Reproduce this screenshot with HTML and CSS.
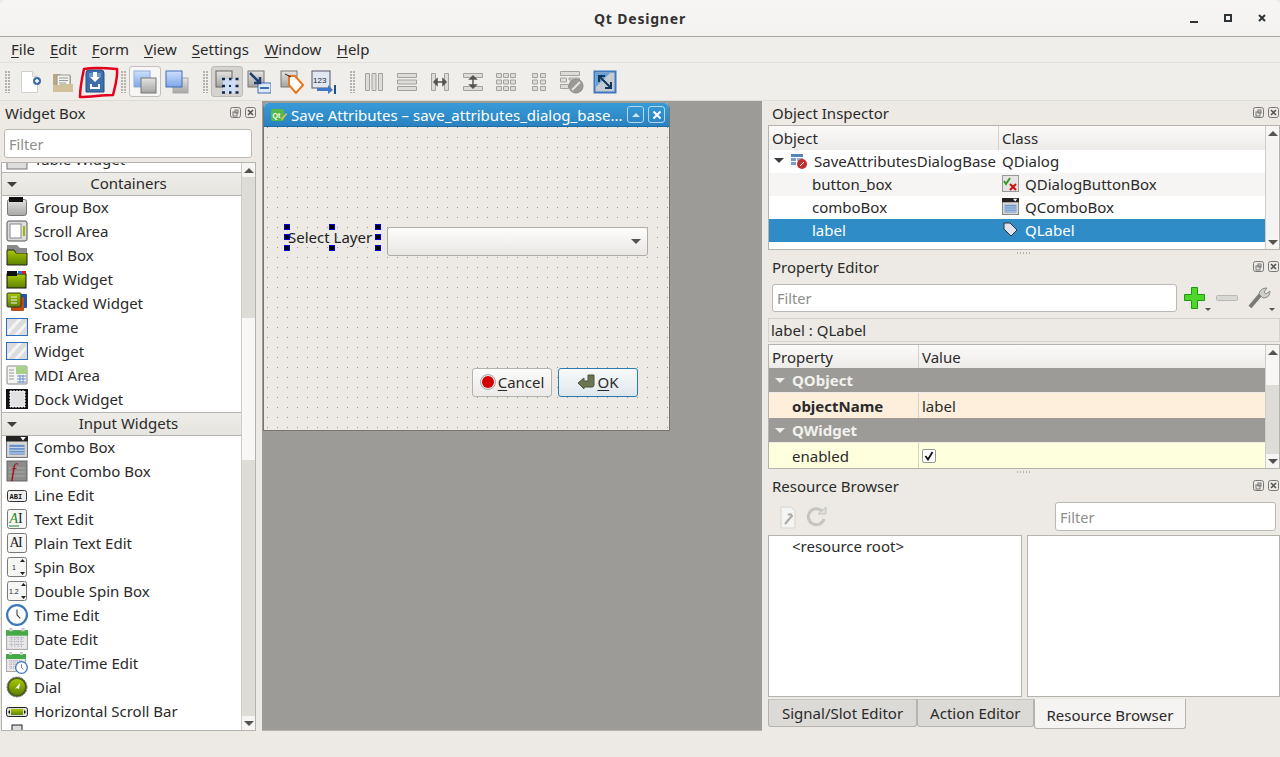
FILE: index.html
```html
<!DOCTYPE html>
<html lang="en">
<head>
  <meta charset="UTF-8" />
  <title>Qt Designer</title>
  <link rel="stylesheet" href="styles.css">
</head>
<body>
  <svg class="defs" width="0" height="0">
    <defs>
      <linearGradient id="gBlue" x1="0" y1="0" x2="0" y2="1"><stop offset="0" stop-color="#cfe0fb"/><stop offset="1" stop-color="#7ea6e8"/></linearGradient>
      <linearGradient id="gGrey" x1="0" y1="0" x2="0" y2="1"><stop offset="0" stop-color="#e4e4e2"/><stop offset="1" stop-color="#a5a5a3"/></linearGradient>
      <linearGradient id="gGreen" x1="0" y1="0" x2="0" y2="1"><stop offset="0" stop-color="#a8c800"/><stop offset="1" stop-color="#5f8000"/></linearGradient>
      <symbol id="dockbtns" viewBox="0 0 26 12">
        <rect x=".5" y=".5" width="10" height="10" rx="2" fill="none" stroke="#777"/><rect x="3" y="5" width="4" height="4" fill="none" stroke="#777"/><rect x="5" y="3" width="3" height="3" fill="none" stroke="#777"/>
        <rect x="15.5" y=".5" width="10" height="10" rx="2" fill="none" stroke="#777"/><path d="M18 3l5 5M23 3l-5 5" stroke="#555" stroke-width="1.6"/>
      </symbol>
      <symbol id="hatch" viewBox="0 0 22 18">
        <rect x="1" y="1" width="20" height="16" fill="#dcdcdc"/>
        <path d="M1 13L12 1h4L2 17zM8 17L20 4v4L12 17z" fill="#f4f4f4"/>
      </symbol>
      <symbol id="combo" viewBox="0 0 20 20">
        <rect x=".5" y=".5" width="19" height="19" fill="#d8d8d6" stroke="#777"/><rect x="0" y="0" width="20" height="5" fill="#222"/><path d="M13 1h5l-2.5 3z" fill="#fff"/>
        <rect x="3" y="8" width="14" height="9" fill="#6a93c8"/><path d="M3 10.5h14M3 13h14M3 15.5h14" stroke="#c8d8ec"/>
      </symbol>
      <symbol id="clock" viewBox="0 0 20 20">
        <circle cx="10" cy="10" r="9" fill="#fff" stroke="#3c78b8" stroke-width="2"/><path d="M10 5v5l3 3" fill="none" stroke="#444"/>
      </symbol>
      <symbol id="calendar" viewBox="0 0 20 20">
        <rect x=".5" y="2.5" width="19" height="17" fill="#e8e8e8" stroke="#aaa"/><rect x="0" y="2" width="20" height="5" fill="#45a945"/>
        <path d="M3 9h14M3 12h14M3 15h14M5 8v9M8 8v9M11 8v9M14 8v9" stroke="#aab" stroke-dasharray="1 1"/><rect x="3" y="0" width="3" height="3" fill="#ccc"/><rect x="14" y="0" width="3" height="3" fill="#ccc"/>
      </symbol>
    </defs>
  </svg>

  <header class="titlebar">
    <span class="window-title">Qt Designer</span>
    <div class="window-controls">
      <svg width="10" height="10" viewBox="0 0 10 10"><path d="M0 8h8" stroke="#2e3436" stroke-width="2"/></svg>
      <svg width="10" height="10" viewBox="0 0 10 10"><rect x="1" y="1" width="6" height="6" fill="none" stroke="#2e3436" stroke-width="2"/></svg>
      <svg width="10" height="10" viewBox="0 0 10 10"><path d="M1 1l6 6M7 1L1 7" stroke="#2e3436" stroke-width="2"/></svg>
    </div>
  </header>

  <nav class="menubar">
    <span class="menu"><u>F</u>ile</span>
    <span class="menu"><u>E</u>dit</span>
    <span class="menu"><u>F</u>orm</span>
    <span class="menu"><u>V</u>iew</span>
    <span class="menu"><u>S</u>ettings</span>
    <span class="menu"><u>W</u>indow</span>
    <span class="menu"><u>H</u>elp</span>
  </nav>

  <div class="toolbar">
    <i class="grip"></i>
    <span class="tool"><svg width="24" height="24" viewBox="0 0 24 24"><path d="M3.500 1.500h11l5 5v16h-16z" fill="#fff" stroke="#d0d0cc"/><path d="M14.500 1.500v5h5" fill="#eee" stroke="#d0d0cc"/><circle cx="19" cy="11" r="4" fill="#3f6fa8"/><path d="M17 11h4M19 9v4" stroke="#fff" stroke-width="1.500"/></svg></span>
    <span class="tool"><svg width="24" height="24" viewBox="0 0 24 24"><path d="M2 4h7l2 2h9v16H2z" fill="#b9a785"/><rect x="6" y="5" width="13" height="11" fill="#f2f2ee" stroke="#9a9a92"/><path d="M8 8h9M8 10.500h9M8 13h7" stroke="#9a9a92"/><path d="M2 15h6l1-1h13v8H2z" fill="#d2c09c"/></svg></span>
    <span class="tool tool-save">
      <svg width="24" height="26" viewBox="0 0 24 26"><path d="M3 4q0-3 3-3h12q3 0 3 3v19H3z" fill="#3d6eb0" stroke="#24507f"/><path d="M6 4h12v4H6z" fill="#6d97cc"/><path d="M10 3h4v5h3l-5 5-5-5h3z" fill="#fff"/><path d="M7 15h2v3h6v-3h2v5H7z" fill="#fff"/></svg>
      <svg class="scribble" width="44" height="36" viewBox="0 0 44 36"><path d="M6 4c10-2 22-1 33 0 1 8-2 18-4 26-11 0-22 2-33 2 0-10 2-19 4-28z" fill="none" stroke="#e4001c" stroke-width="2.500" stroke-linejoin="round"/></svg>
    </span>
    <i class="grip"></i>
    <span class="tool tool-on"><svg width="24" height="24" viewBox="0 0 24 24"><rect x="1" y="1" width="16" height="16" fill="url(#gBlue)" stroke="#8fabd8"/><rect x="8" y="8" width="15" height="15" fill="url(#gGrey)" stroke="#777"/></svg></span>
    <span class="tool"><svg width="24" height="24" viewBox="0 0 24 24"><rect x="8" y="8" width="15" height="15" fill="url(#gGrey)" stroke="#aaa"/><rect x="1" y="1" width="16" height="16" fill="url(#gBlue)" stroke="#3f6fb0"/></svg></span>
    <i class="grip"></i>
    <span class="tool tool-checked"><svg width="24" height="24" viewBox="0 0 24 24"><rect x="1" y="1" width="16" height="16" fill="url(#gGrey)" stroke="#666"/><rect x="8" y="9" width="14" height="14" fill="#cfdcf2"/><path d="M7 9h3M14 9h2.500M20.500 9h3M7 16h3M20.500 16h3M7 22.500h3M14 22.500h2.500M20.500 22.500h3" stroke="#10284c" stroke-width="2.500"/><rect x="14" y="15" width="2" height="2" fill="#10284c"/></svg></span>
    <span class="tool"><svg width="24" height="24" viewBox="0 0 24 24"><rect x="1" y="1" width="16" height="16" fill="url(#gGrey)" stroke="#777"/><rect x="11" y="13" width="13" height="10" fill="#dfe8f6" stroke="#3f6fb0"/><path d="M13 18h9" stroke="#3f6fb0" stroke-width="2"/><path d="M3 3l10 10M13 7v6H7" fill="none" stroke="#1f3f70" stroke-width="2.500"/></svg></span>
    <span class="tool"><svg width="24" height="24" viewBox="0 0 24 24"><rect x="1" y="1" width="16" height="16" fill="url(#gGrey)" stroke="#777"/><path d="M9 6h6l8 9-7 8-7-8z" fill="#fff" stroke="#e87820" stroke-width="2"/><path d="M5 4l6 3" stroke="#222"/></svg></span>
    <span class="tool"><svg width="26" height="24" viewBox="0 0 26 24"><rect x="1" y="1" width="18" height="17" fill="#e2e8f2" stroke="#556"/><text x="2" y="13" class="icon-num-big">123</text><path d="M6 18h11v-3l5 5-5 4v-3H6z" fill="#3f78c8"/><rect x="23" y="15" width="2" height="9" fill="#24507f"/></svg></span>
    <i class="grip"></i>
    <div class="tool-group">
      <span class="tool"><svg width="24" height="24" viewBox="0 0 24 24" class="off"><path d="M3.500 3.500h4v17h-4zM10 3.500h4v17h-4zM16.500 3.500h4v17h-4z"/></svg></span>
      <span class="tool"><svg width="24" height="24" viewBox="0 0 24 24" class="off"><path d="M2.500 3.500h19v4h-19zM2.500 10h19v4h-19zM2.500 16.500h19v4h-19z"/></svg></span>
      <span class="tool"><svg width="24" height="24" viewBox="0 0 24 24" class="off"><path d="M3.500 3.500h4v17h-4zM16.500 3.500h4v17h-4z"/><path d="M6 12h12M9 9l-3 3 3 3zM15 9l3 3-3 3z" class="off-dark"/></svg></span>
      <span class="tool"><svg width="24" height="24" viewBox="0 0 24 24" class="off"><path d="M2.500 3.500h19v4h-19zM2.500 16.500h19v4h-19z"/><path d="M12 6v12M9 9l3-3 3 3zM9 15l3 3 3-3z" class="off-dark"/></svg></span>
      <span class="tool"><svg width="24" height="24" viewBox="0 0 24 24" class="off"><path d="M2.500 3.500h5v4h-5zM9.500 3.500h5v4h-5zM16.500 3.500h5v4h-5zM2.500 10h5v4h-5zM9.500 10h5v4h-5zM16.500 10h5v4h-5zM2.500 16.500h5v4h-5zM9.500 16.500h5v4h-5zM16.500 16.500h5v4h-5z"/></svg></span>
      <span class="tool"><svg width="24" height="24" viewBox="0 0 24 24" class="off"><path d="M5.500 3.500h5v4h-5zM13.500 3.500h5v4h-5zM5.500 10h5v4h-5zM13.500 10h5v4h-5zM5.500 16.500h5v4h-5zM13.500 16.500h5v4h-5z"/></svg></span>
      <span class="tool"><svg width="26" height="24" viewBox="0 0 26 24" class="off"><path d="M1.500 1.500h19v4h-19zM1.500 8h6v4h-6zM10 8h10.500v2H10zM1.500 14.500h8v4h-8z"/><circle cx="17" cy="16" r="7" class="off-disc"/><path d="M13 20l8-8" class="off-slash"/></svg></span>
      <span class="tool"><svg width="24" height="24" viewBox="0 0 24 24"><rect x="1.500" y="1.500" width="21" height="21" fill="#c4ccd2" stroke="#3f78c0" stroke-width="2"/><path d="M3 3h14L3 17z" fill="#6aa0d8"/><path d="M6 6l12 12M6 12V6h6M18 12v6h-6" fill="none" stroke="#123858" stroke-width="2"/></svg></span>
    </div>
  </div>

  <main class="workspace">
    <aside class="dock dock-left">
      <div class="dock-title">Widget Box <svg class="dock-btns"><use href="#dockbtns"/></svg></div>
      <input class="filter filter-box" placeholder="Filter">
      <div class="widget-box">
        <div class="widget-list">
          <div class="widget-scroll">
            <div class="widget"><svg width="22" height="22" viewBox="0 0 22 22"><rect x="1" y="1" width="20" height="20" fill="#ddd" stroke="#777"/></svg>Table Widget</div>
            <div class="group"><span class="arrow"></span>Containers</div>
            <div class="widget"><svg width="22" height="22" viewBox="0 0 22 22"><rect x="1.500" y="3.500" width="19" height="16" rx="2" fill="url(#gGrey)" stroke="#777"/><rect x="3" y="1" width="14" height="5" fill="#111"/></svg>Group Box</div>
            <div class="widget"><svg width="22" height="22" viewBox="0 0 22 22"><rect x="1" y="1" width="20" height="20" rx="2" fill="#ddd" stroke="#555"/><rect x="4" y="4" width="11" height="14" fill="#fff" stroke="#888"/><rect x="17" y="6" width="2" height="10" fill="#9ab800"/></svg>Scroll Area</div>
            <div class="widget"><svg width="22" height="22" viewBox="0 0 22 22"><path d="M1 1h10l3 3h7v4H1z" fill="#8a8a88"/><path d="M1 6h7l2 3h11v12H1z" fill="url(#gGreen)" stroke="#222"/></svg>Tool Box</div>
            <div class="widget"><svg width="22" height="22" viewBox="0 0 22 22"><rect x="1" y="6" width="19" height="14" fill="url(#gGreen)" stroke="#111"/><rect x="1" y="3" width="10" height="5" fill="#111"/><rect x="12" y="3" width="4" height="3" fill="#2a6fd0"/><rect x="16" y="3" width="4" height="3" fill="#d02020"/></svg>Tab Widget</div>
            <div class="widget"><svg width="22" height="22" viewBox="0 0 22 22"><rect x="9" y="2" width="12" height="14" rx="1" fill="#1f55b0"/><rect x="5" y="5" width="13" height="14" rx="1" fill="#c04a10"/><rect x="1" y="1" width="14" height="14" rx="1" fill="url(#gGreen)" stroke="#333"/><path d="M5 5h6M5 8h6M5 11h6" stroke="#eef"/></svg>Stacked Widget</div>
            <div class="widget"><svg width="22" height="22" viewBox="0 0 22 18"><use href="#hatch"/><rect x=".5" y=".5" width="21" height="17" fill="none" stroke="#2a6fc0"/></svg>Frame</div>
            <div class="widget"><svg width="22" height="22" viewBox="0 0 22 18"><use href="#hatch"/><rect x=".5" y=".5" width="21" height="17" fill="none" stroke="#2a6fc0"/></svg>Widget</div>
            <div class="widget"><svg width="22" height="22" viewBox="0 0 22 22"><rect x="1" y="2" width="20" height="18" rx="1" fill="#f4f4f0" stroke="#888"/><rect x="10" y="2" width="11" height="8" fill="#a8d088"/><path d="M3 6h5M3 9h5M3 12h5M3 15h5" stroke="#999"/><path d="M11 12h9M11 15h9M11 18h9M14 11v8M17 11v8" stroke="#6a93c8"/></svg>MDI Area</div>
            <div class="widget"><svg width="22" height="22" viewBox="0 0 22 22"><rect x="0" y="1" width="22" height="20" fill="#111"/><rect x="4" y="3" width="15" height="16" fill="#e2e2e2" stroke="#fff" stroke-dasharray="2 1"/></svg>Dock Widget</div>
            <div class="group"><span class="arrow"></span>Input Widgets</div>
            <div class="widget"><svg width="22" height="22" viewBox="0 0 20 20"><use href="#combo"/></svg>Combo Box</div>
            <div class="widget"><svg width="22" height="22" viewBox="0 0 22 22"><rect x="1" y="1" width="20" height="20" fill="#8c8c8a" stroke="#666"/><path d="M3 8h16M3 12h16M3 16h16" stroke="#aaa"/><text x="5" y="17" class="icon-f">f</text></svg>Font Combo Box</div>
            <div class="widget"><svg width="22" height="22" viewBox="0 0 22 22"><rect x="1.500" y="6.500" width="19" height="11" rx="2" fill="#eee" stroke="#333"/><text x="3.500" y="15" class="icon-abc">ABI</text></svg>Line Edit</div>
            <div class="widget"><svg width="22" height="22" viewBox="0 0 22 22"><rect x="1.500" y="1.500" width="19" height="19" rx="2" fill="#f6f6f4" stroke="#777"/><text x="3.500" y="15" class="icon-ai icon-ai-g">A</text><text x="12" y="15" class="icon-ai">I</text><path d="M3 18h10" stroke="#1e8a2c"/></svg>Text Edit</div>
            <div class="widget"><svg width="22" height="22" viewBox="0 0 22 22"><rect x="1.500" y="1.500" width="19" height="19" rx="2" fill="#f6f6f4" stroke="#777"/><text x="3.500" y="15" class="icon-ai">A</text><text x="12" y="15" class="icon-ai">I</text></svg>Plain Text Edit</div>
            <div class="widget"><svg width="22" height="22" viewBox="0 0 22 22"><rect x="1.500" y="1.500" width="19" height="19" rx="2" fill="#f6f6f4" stroke="#777"/><text x="6" y="14" class="icon-num">1</text><path d="M14 6l2.500-3 2.500 3zM14 16l2.500 3 2.500-3z" fill="#222"/></svg>Spin Box</div>
            <div class="widget"><svg width="22" height="22" viewBox="0 0 22 22"><rect x="1.500" y="1.500" width="19" height="19" rx="2" fill="#f6f6f4" stroke="#777"/><text x="3" y="14" class="icon-num">1.2</text><path d="M15 6l2.500-3 2.500 3zM15 16l2.500 3 2.500-3z" fill="#222"/></svg>Double Spin Box</div>
            <div class="widget"><svg width="22" height="22" viewBox="0 0 20 20"><use href="#clock"/></svg>Time Edit</div>
            <div class="widget"><svg width="22" height="22" viewBox="0 0 20 20"><use href="#calendar"/></svg>Date Edit</div>
            <div class="widget"><svg width="22" height="22" viewBox="0 0 22 22"><svg x="0" y="0" width="20" height="20" viewBox="0 0 20 20"><use href="#calendar"/></svg><svg x="9" y="9" width="13" height="13" viewBox="0 0 20 20"><use href="#clock"/></svg></svg>Date/Time Edit</div>
            <div class="widget"><svg width="22" height="22" viewBox="0 0 22 22"><circle cx="11" cy="11" r="10" fill="#4a5a20" stroke-dasharray="2 1" stroke="#777"/><circle cx="11" cy="11" r="8" fill="url(#gGreen)"/><path d="M9 13l5-6-1 6-2-1z" fill="#fff"/></svg>Dial</div>
            <div class="widget"><svg width="22" height="22" viewBox="0 0 22 22"><rect x=".5" y="7.500" width="21" height="9" rx="2" fill="#ddd" stroke="#222"/><rect x="5" y="9" width="12" height="6" fill="url(#gGreen)"/><path d="M4 10v4l-2-2zM18 10v4l2-2z" fill="#111"/></svg>Horizontal Scroll Bar</div>
            <div class="widget"><svg width="22" height="22" viewBox="0 0 22 22"><rect x="6" y="1" width="10" height="20" fill="#ddd" stroke="#222"/></svg>Vertical Scroll Bar</div>
          </div>
        </div>
        <div class="vscroll">
          <span class="sb-btn"><b class="up"></b></span>
          <span class="sb-track"><i class="sb-before"></i><i class="sb-thumb sb-thumb-widget"></i></span>
          <span class="sb-btn"><b class="down"></b></span>
        </div>
      </div>
    </aside>

    <section class="mdi">
      <div class="form-window">
        <div class="form-title">
          <svg width="16" height="14" viewBox="0 0 16 14"><rect x="0" y="1" width="13" height="12" rx="2" fill="#55b848"/><text x="1.500" y="9.500" class="icon-qt">Qt</text><path d="M10 11l5-6 1 1-5 6z" fill="#e8d048"/></svg>
          <span class="form-title-text">Save Attributes – save_attributes_dialog_base...</span>
          <span class="form-btn"><svg width="10" height="8" viewBox="0 0 10 8"><path d="M1 6l4-4 4 4z" fill="#cfe3f3"/></svg></span>
          <span class="form-btn"><svg width="10" height="10" viewBox="0 0 10 10"><path d="M1.500 1.500l7 7M8.500 1.500l-7 7" stroke="#fff" stroke-width="2"/></svg></span>
        </div>
        <div class="form-body">
          <div class="form-row">
            <span class="form-label">Select Layer
              <i class="handle h-tl"></i><i class="handle h-tc"></i><i class="handle h-tr"></i>
              <i class="handle h-ml"></i><i class="handle h-mr"></i>
              <i class="handle h-bl"></i><i class="handle h-bc"></i><i class="handle h-br"></i>
            </span>
            <span class="form-combo"><b class="down"></b></span>
          </div>
          <div class="form-buttons">
            <span class="push"><svg width="16" height="16" viewBox="0 0 16 16"><circle cx="8" cy="8" r="7.500" fill="#e8e8e8" stroke="#aaa"/><circle cx="8" cy="8" r="6" fill="#d40000"/></svg><span><u>C</u>ancel</span></span>
            <span class="push push-default"><svg width="18" height="16" viewBox="0 0 18 16"><path d="M1 9l6-5v3h4V1h6v10q0 2-2 2H7v2z" fill="#6d7550" stroke="#4f5538"/></svg><span><u>O</u>K</span></span>
          </div>
        </div>
      </div>
    </section>

    <aside class="dock dock-right">
      <div class="dock-title dock-title-first">Object Inspector <svg class="dock-btns"><use href="#dockbtns"/></svg></div>
      <div class="view inspector">
        <div class="view-main">
          <div class="head-row"><span class="col-object">Object</span><span>Class</span></div>
          <div class="tree-row"><span class="col-object tree-root"><span class="arrow"></span><svg width="18" height="16" viewBox="0 0 18 16"><rect x="1" y="1" width="12" height="3" fill="#5a84b8"/><rect x="1" y="5" width="5" height="3" fill="#7a9cc8"/><rect x="7" y="5" width="6" height="3" fill="#aac"/><rect x="1" y="9" width="5" height="3" fill="#7a9cc8"/><circle cx="12" cy="11" r="5" fill="#c03030"/><path d="M10 13l4-4" stroke="#fff"/></svg>SaveAttributesDialogBase</span><span>QDialog</span></div>
          <div class="tree-row tree-alt"><span class="col-object tree-child">button_box</span><span class="class-cell"><svg width="17" height="17" viewBox="0 0 17 17"><rect x=".5" y=".5" width="16" height="16" fill="#e4e4e2" stroke="#999"/><path d="M2 6l2 3 4-6" fill="none" stroke="#3a9a2a" stroke-width="2"/><path d="M8 9l6 6M14 9l-6 6" stroke="#d01010" stroke-width="2"/></svg>QDialogButtonBox</span></div>
          <div class="tree-row"><span class="col-object tree-child">comboBox</span><span class="class-cell"><svg width="17" height="17" viewBox="0 0 20 20"><use href="#combo"/></svg>QComboBox</span></div>
          <div class="tree-row tree-selected"><span class="col-object tree-child">label</span><span class="class-cell"><svg width="17" height="17" viewBox="0 0 17 17"><path d="M2 2h6l7 7-6 6-7-7z" fill="#dde4ee" stroke="#333"/></svg>QLabel</span></div>
        </div>
        <div class="vscroll vscroll-plain">
          <span class="sb-btn"><b class="up"></b></span>
          <span class="sb-track"></span>
          <span class="sb-btn"><b class="down"></b></span>
        </div>
      </div>
      <div class="splitter"></div>

      <div class="dock-title">Property Editor <svg class="dock-btns"><use href="#dockbtns"/></svg></div>
      <div class="prop-tools">
        <input class="filter filter-prop" placeholder="Filter">
        <span class="mini"><svg width="24" height="24" viewBox="0 0 24 24"><path d="M8.500 1.500h6v7h7v6h-7v8h-6v-8h-7v-6h7z" fill="#4fd62a" stroke="#1e9a10"/></svg><b class="down tiny"></b></span>
        <span class="mini"><svg width="24" height="24" viewBox="0 0 24 24"><rect x="1.500" y="9.500" width="21" height="5" rx="1" fill="#d8d8d4" stroke="#b8b8b4"/></svg></span>
        <span class="mini"><svg width="24" height="24" viewBox="0 0 24 24"><path d="M3 21L14 8" stroke="#7a7a76" stroke-width="4"/><path d="M12 8q1-6 8-6l-3 4 2 2 4-3q0 7-7 7z" fill="#cfcfcb" stroke="#8a8a86"/></svg><b class="down tiny"></b></span>
      </div>
      <div class="prop-class">label : QLabel</div>
      <div class="view properties">
        <div class="view-main">
          <div class="head-row"><span class="col-prop">Property</span><span>Value</span></div>
          <div class="prop-group"><span class="arrow arrow-dark"></span>QObject</div>
          <div class="prop-row prop-orange"><span class="col-prop prop-name"><b>objectName</b></span><span>label</span></div>
          <div class="prop-group"><span class="arrow arrow-dark"></span>QWidget</div>
          <div class="prop-row prop-yellow"><span class="col-prop prop-name">enabled</span><span class="checkbox"><svg width="10" height="10" viewBox="0 0 10 10"><path d="M1.500 5l2.500 3.500L8.500 1" fill="none" stroke="#111" stroke-width="1.800"/></svg></span></div>
        </div>
        <div class="vscroll">
          <span class="sb-btn"><b class="up"></b></span>
          <span class="sb-track"><i class="sb-thumb sb-thumb-prop"></i></span>
          <span class="sb-btn"><b class="down"></b></span>
        </div>
      </div>
      <div class="splitter"></div>

      <div class="dock-title">Resource Browser <svg class="dock-btns"><use href="#dockbtns"/></svg></div>
      <div class="res-tools">
        <span class="res-icons">
          <svg width="20" height="24" viewBox="0 0 20 24"><path d="M3 2h10l4 4v17H3z" fill="#f4f4f2" stroke="#d4d4d0"/><path d="M7 19l5-6M10 10q3-2 4 1l-2 2" fill="none" stroke="#a8a8a4" stroke-width="2"/></svg>
          <svg width="22" height="24" viewBox="0 0 22 24"><path d="M18 14a8 8 0 1 1-2-8" fill="none" stroke="#c4c4c0" stroke-width="3"/><path d="M12 9h8V2z" fill="#dcdcd8" stroke="#c4c4c0"/></svg>
        </span>
        <input class="filter filter-res" placeholder="Filter">
      </div>
      <div class="res-panes">
        <div class="res-tree">&lt;resource root&gt;</div>
        <div class="res-list"></div>
      </div>
      <div class="tabs">
        <span class="tab">Signal/Slot Editor</span>
        <span class="tab">Action Editor</span>
        <span class="tab tab-active">Resource Browser</span>
      </div>
    </aside>
  </main>
</body>
</html>
```
FILE: styles.css
```css
* { box-sizing: border-box; }
html, body { height: 100%; }
body {
  margin: 0; height: 757px; overflow: hidden;
  display: flex; flex-direction: column;
  background: #edeae5; color: #2a2a2a;
  font-family: "Noto Sans", "Open Sans", sans-serif; font-size: 15px;
}
.defs { position: absolute; }
u { text-underline-offset: 2px; }
input { font: inherit; }
.icon-num { font: 7px "Liberation Sans", sans-serif; fill: #223; }
.icon-num-big { font: 8px "Liberation Sans", sans-serif; fill: #223; }
.icon-f { font: italic 18px "Liberation Serif", serif; fill: #a01010; }
.icon-abc { font: bold 7px "Liberation Mono", monospace; fill: #111; }
.icon-ai { font: 14px "Liberation Serif", serif; fill: #222; }
.icon-ai-g { font-style: italic; fill: #1e8a2c; }
.icon-qt { font: bold 7px "Liberation Sans", sans-serif; fill: #fff; }

/* window frame */
.titlebar {
  height: 37px; flex: none; display: flex; align-items: center; justify-content: center;
  position: relative;
  background: linear-gradient(#f7f6f5, #f3f2f0);
  border-bottom: 1px solid #aba9a5; border-radius: 6px 6px 0 0;
}
.window-title { font-weight: 700; font-size: 14px; color: #333; letter-spacing: .8px; }
.window-controls { position: absolute; right: 12px; top: 14px; display: flex; gap: 24px; }

.menubar { height: 25px; flex: none; display: flex; padding-left: 3.5px; background: #f0eeea; }
.menu { padding: 1px 7.5px 0; line-height: 22px; }
.menu:nth-child(n+6) { margin-left: .5px; }

.toolbar {
  height: 39px; flex: none; display: flex; align-items: center;
  background: #f0eeea;
  border-top: 1px solid #e2e0db; border-bottom: 1px solid #dedcd7;
}
.grip {
  width: 5px; height: 22px; margin: 0 3px 0 9px; flex: none;
  background: radial-gradient(circle at 1px 1px, #b5b3ae 1px, transparent 1px) 0 0 / 3px 3px;
}
.grip:first-child { margin: 0 4px 0 5px; }
.tool { width: 32.5px; height: 31px; flex: none; display: flex; align-items: center; justify-content: center; border: 1px solid transparent; border-radius: 3px; }
.tool-group { display: flex; }
.tool-group .tool { width: 33px; }
.tool-on { background: #f8f7f6; border-color: #c2c0bc; }
.tool-checked { background: #d5d3cf; border-color: #bdbbb7; }
.tool-save { position: relative; }
.scribble { position: absolute; left: -2px; top: -2px; }
.off path { fill: #dedcd8; stroke: #a4a29e; }
.off .off-dark { fill: #55554f; stroke: #55554f; stroke-width: 1.500; }
.off .off-slash { fill: none; stroke: #e4e4e2; stroke-width: 2; }
.off-disc { fill: #9a9a96; stroke: #8a8a86; }

.workspace { flex: 1; min-height: 0; display: flex; align-items: flex-start; }

/* docks */
.dock { display: flex; flex-direction: column; flex: none; }
.dock-left { width: 262px; height: 630px; padding: 0 6px 0 1px; }
.dock-right { width: 518px; padding-left: 6px; }
.dock-title { height: 26px; flex: none; display: flex; align-items: center; justify-content: space-between; padding: 0 1px 2px 4px; }
.dock-left .dock-title { height: 25px; padding-right: 0; }
.dock-title-first { height: 24px; padding-bottom: 0; }
.dock-btns { width: 26px; height: 12px; flex: none; }

.filter {
  height: 28px; border: 1px solid #bbb9b4; border-radius: 3px; background: #fff;
  padding: 0 4px; outline: none; color: #2a2a2a; font-size: 14.5px;
}
.filter::placeholder { color: #8e8e8a; opacity: 1; }
.filter-box { width: 248px; height: 29px; margin: 3px 0 4px 3px; flex: none; }

.widget-box { flex: 1; display: flex; min-height: 0; border: 1px solid #b5b3ae; }
.widget-list { flex: 1; overflow: hidden; background: #fff; }
.widget-scroll { margin-top: -15px; }
.widget { height: 24px; display: flex; align-items: center; gap: 6px; padding: 0 0 2px 4px; white-space: nowrap; }
.widget svg { flex: none; }
.group {
  height: 24px; position: relative; display: flex; align-items: center; justify-content: center;
  padding: 0 0 2px 14px;
  background: linear-gradient(#efede9, #e6e4df);
  border-top: 1px solid #b5b3ae; border-bottom: 1px solid #b5b3ae;
}
.group .arrow { position: absolute; left: 5px; top: 9px; }
.arrow { display: inline-block; width: 0; height: 0; border: 5px solid transparent; border-top: 5px solid #3e3e3c; border-bottom: 0; flex: none; }
.arrow-dark { border-top-color: #f0eeea; }

/* scroll bars */
.vscroll { width: 14px; flex: none; display: flex; flex-direction: column; background: #dedcd7; border-left: 1px solid #cfcdc8; }
.vscroll-plain { background: #f4f3f1; }
.sb-btn { height: 14px; flex: none; display: flex; align-items: center; justify-content: center; background: #f6f5f3; }
.sb-track { flex: 1; display: flex; flex-direction: column; }
.sb-before { display: block; height: 141px; flex: none; }
.sb-thumb { display: block; flex: none; background: #f8f7f5; }
.sb-thumb-widget { height: 142px; }
.sb-thumb-prop { height: 26px; }
.up, .down { display: block; width: 0; height: 0; border: 5px solid transparent; }
.up { border-bottom: 5px solid #55534f; border-top: 0; }
.down { border-top: 5px solid #55534f; border-bottom: 0; }
.tiny { border-width: 3px; border-bottom-width: 0; position: absolute; right: -4px; bottom: 0; }

/* MDI area and the form */
.mdi { flex: 1; height: 630px; position: relative; background: #9c9b97; border-bottom: 1px solid #b5b3ae; }
.form-window {
  position: absolute; left: 1px; top: 2px; width: 407px; height: 328px;
  display: flex; flex-direction: column;
  border: 1px solid #76746f; border-top: 0; border-radius: 5px 5px 0 0;
  background: #edeae5;
}
.form-title {
  height: 24px; flex: none; display: flex; align-items: center; padding: 0 4px 0 7px;
  background: linear-gradient(#379bd8, #2a82bf); color: #fff;
  border-bottom: 1px solid #1d6c9f; border-radius: 5px 5px 0 0; gap: 4px;
}
.form-title-text { flex: 1; white-space: nowrap; overflow: hidden; }
.form-btn { width: 17px; height: 17px; flex: none; display: flex; align-items: center; justify-content: center; border: 1px solid #b6d6ec; border-radius: 3px; }
.form-body {
  flex: 1; display: flex; flex-direction: column;
  background: radial-gradient(circle at 3.500px .5px, #9a9893 .5px, transparent .8px) 0 0 / 10px 10px, #edeae5;
  padding: 100px 21px 0 23px;
}
.form-row { display: flex; align-items: flex-start; gap: 9px; height: 29px; }
.form-label { position: relative; white-space: nowrap; color: #222; width: 91px; height: 21px; padding-left: 1px; line-height: 21px; }
.handle { position: absolute; width: 6px; height: 6px; background: #000; border: 1px solid #0000e0; }
.h-tl, .h-tc, .h-tr { top: -3px; }
.h-ml, .h-mr { top: 7px; }
.h-bl, .h-bc, .h-br { top: 18px; }
.h-tl, .h-ml, .h-bl { left: -3px; }
.h-tc, .h-bc { left: 42px; }
.h-tr, .h-mr, .h-br { left: 88px; }
.form-combo {
  width: 261px; height: 29px; flex: none;
  display: flex; align-items: center; justify-content: flex-end; padding-right: 6px;
  background: linear-gradient(#fdfdfc, #e9e7e4);
  border: 1px solid #aeaca7; border-radius: 3px;
}
.form-buttons { display: flex; justify-content: flex-end; gap: 6px; margin: 112px 10px 0 0; }
.push {
  width: 80px; height: 29px; display: flex; align-items: center; justify-content: center; gap: 2px;
  padding-bottom: 2px;
  background: linear-gradient(#fbfbfa, #eceae7); border: 1px solid #b5b3ae; border-radius: 3px;
}
.push-default { background: linear-gradient(#f8fafb, #dfe7ec); border-color: #2a7cb0; }

/* inspector views */
.view { display: flex; flex: none; border: 1px solid #b5b3ae; background: #fff; }
.view-main { flex: 1; min-width: 0; }
.inspector { height: 125px; }
.properties { height: 125px; }
.head-row {
  height: 24px; display: flex; align-items: center;
  background: linear-gradient(#fbfaf9, #eeece9);
}
.properties .head-row { height: 23px; }
.head-row > span:last-child { padding-left: 3px; }
.col-object { width: 230px; flex: none; padding-left: 3px; display: flex; align-items: center; }
.head-row .col-object { border-right: 1px solid #d5d3ce; height: 100%; }
.tree-row { height: 23px; display: flex; align-items: center; white-space: nowrap; padding-bottom: 2px; }
.tree-row > span:last-child { padding-left: 3px; }
.tree-root { padding-left: 5px; gap: 6px; }
.tree-child { padding-left: 43px; }
.tree-alt { background: #f6f5f3; }
.tree-selected { background: #308cc6; color: #fff; }
.class-cell { display: flex; align-items: center; gap: 6px; }

.splitter { height: 5px; flex: none; padding-top: 2px; }
.splitter::after {
  content: ""; display: block; width: 15px; height: 2px; margin: 0 auto;
  background: repeating-linear-gradient(90deg, #b5b3ae 0 1px, transparent 1px 3px);
}

.prop-tools { height: 34px; flex: none; display: flex; align-items: center; gap: 8px; padding-left: 4px; }
.filter-prop { width: 405px; margin-right: -2px; }
.mini { width: 24px; height: 26px; flex: none; position: relative; display: flex; align-items: center; justify-content: center; }
.prop-class { height: 24px; flex: none; display: flex; align-items: center; padding-left: 2px; border: 1px solid #d5d3ce; margin: 3px 0 2px; }
.col-prop { width: 150px; flex: none; padding-left: 3px; height: 100%; display: flex; align-items: center; border-right: 1px solid #d5d3ce; }
.prop-group {
  height: 25px; display: flex; align-items: center; gap: 7px; padding-left: 6px;
  background: #9c9b97; color: #f2f1ee; font-weight: 700; border-bottom: 1px solid #eeece9;
}
.prop-row { height: 25px; display: flex; align-items: center; }
.prop-row > span:last-child { margin-left: 3px; }
.prop-name { padding-left: 23px; }
.prop-orange { background: #feefdd; }
.prop-yellow { background: #feffdd; }
.checkbox { width: 14px; height: 14px; display: flex; align-items: center; justify-content: center; background: #fff; border: 1px solid #999; border-radius: 2px; }

.res-tools { height: 35px; flex: none; display: flex; align-items: flex-start; justify-content: space-between; padding: 2px 4px 0 10px; }
.res-icons { display: flex; gap: 8px; padding-top: 3px; }
.filter-res { width: 221px; height: 29px; }
.res-panes { height: 162px; flex: none; display: flex; gap: 5px; }
.res-tree { width: 254px; flex: none; padding: 0 0 0 23px; background: #fff; border: 1px solid #b5b3ae; }
.res-list { flex: 1; background: #fff; border: 1px solid #b5b3ae; }

.tabs { display: flex; height: 32px; margin-top: 2px; flex: none; align-items: flex-start; }
.tab {
  height: 28px; display: flex; align-items: center; padding: 0 12px;
  background: #dcdad6; border: 1px solid #b5b3ae; border-top: 1px solid #c8c6c1; border-radius: 0 0 3px 3px;
}
.tab:first-child { padding: 0 13px; }
.tab-active { height: 30px; padding-top: 2px; background: #f5f4f2; border-top: 0; }
```
